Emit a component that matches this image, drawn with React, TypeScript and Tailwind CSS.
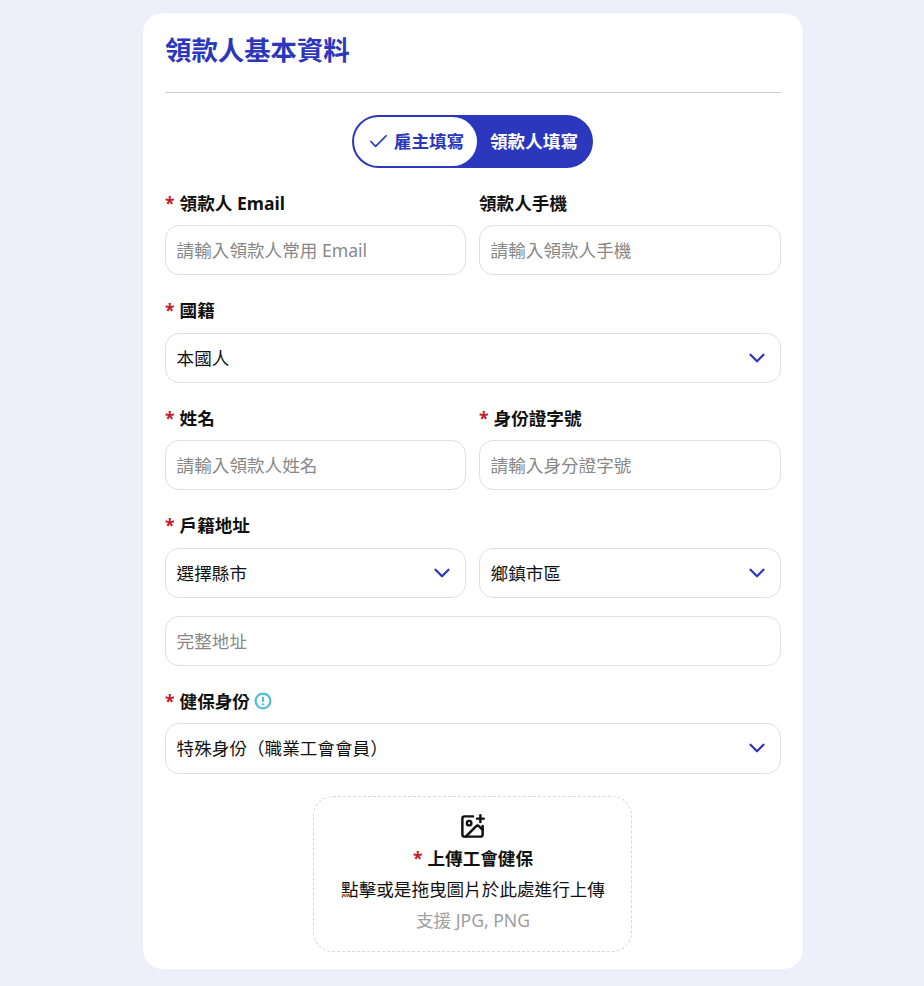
import { Check, ChevronDown, ImagePlus } from 'lucide-react'

const fontStack = "font-['Noto_Sans','Noto_Sans_CJK_TC',sans-serif]"

function FieldLabel({ text, required, className }: { text: string; required?: boolean; className?: string }) {
  return (
    <div className={`flex items-center h-[22px] text-[17.6px] font-bold text-[#111] leading-[22px] ${className ?? ''}`}>
      {required && <span className="text-[#c0202c] mr-[5px]">*</span>}
      <span>{text}</span>
    </div>
  )
}

function TextBox({ placeholder }: { placeholder: string }) {
  return (
    <input
      placeholder={placeholder}
      className="block w-full h-[50.4px] px-[10.6px] text-[17.6px] bg-white border border-[#e0e0e0] rounded-[14px] outline-none placeholder:text-[#888]"
    />
  )
}

function SelectBox({ value }: { value: string }) {
  return (
    <div className="flex items-center justify-between w-full h-[50.4px] pl-[10.6px] pr-[10.5px] text-[17.6px] text-[#111] bg-white border border-[#e0e0e0] rounded-[14px]">
      <span>{value}</span>
      <ChevronDown className="w-[26px] h-[26px] text-[#2b37bd]" strokeWidth={2.1} />
    </div>
  )
}

export default function App() {
  return (
    <div className={`min-h-[986px] bg-[#eeeffb] pt-[13px] pl-[143px] ${fontStack}`}>
      <div className="w-[660px] h-[956px] bg-white rounded-[20px] px-[22px]">
        {/* Header */}
        <div className="h-[80px] border-b border-[#ccc]">
          <h1 className="pt-[20px] text-[26.4px] leading-[34px] font-bold text-[#2b37bd]">領款人基本資料</h1>
        </div>

        {/* Who fills the form */}
        <div className="flex justify-center pr-px mt-[22px]">
          <div className="flex items-center w-[241px] h-[53px] rounded-full bg-[#2b37bd] p-[2px]">
            <div className="flex items-center justify-center gap-[4px] w-[123px] h-full rounded-full bg-white text-[17.6px] font-bold text-[#2b37bd]">
              <Check className="w-[23px] h-[23px]" strokeWidth={1.8} />
              <span>雇主填寫</span>
            </div>
            <div className="flex-1 text-center text-[17.6px] font-bold text-white">領款人填寫</div>
          </div>
        </div>

        {/* Form */}
        <div className="grid grid-cols-[301px_1fr] gap-x-[13px] mt-[23.7px]">
          <div>
            <FieldLabel text="領款人 Email" required className="mb-[11.2px]" />
            <TextBox placeholder="請輸入領款人常用 Email" />
          </div>
          <div>
            <FieldLabel text="領款人手機" className="mb-[11.2px]" />
            <TextBox placeholder="請輸入領款人手機" />
          </div>
        </div>

        <div className="mt-[24.1px]">
          <FieldLabel text="國籍" required className="mb-[11.2px]" />
          <SelectBox value="本國人" />
        </div>

        <div className="grid grid-cols-[301px_1fr] gap-x-[13px] mt-[23.9px]">
          <div>
            <FieldLabel text="姓名" required className="mb-[11.2px]" />
            <TextBox placeholder="請輸入領款人姓名" />
          </div>
          <div>
            <FieldLabel text="身份證字號" required className="mb-[11.2px]" />
            <TextBox placeholder="請輸入身分證字號" />
          </div>
        </div>

        <div className="mt-[24px]">
          <FieldLabel text="戶籍地址" required className="mb-[11.2px]" />
          <div className="grid grid-cols-[301px_1fr] gap-x-[13px]">
            <SelectBox value="選擇縣市" />
            <SelectBox value="鄉鎮市區" />
          </div>
          <div className="mt-[17.9px]">
            <TextBox placeholder="完整地址" />
          </div>
        </div>

        <div className="mt-[23.8px]">
          <div className="flex items-center gap-[4px] mb-[11.2px]">
            <FieldLabel text="健保身份" required />
            <svg width="18" height="18" viewBox="0 0 18 18" fill="none" stroke="#4fbfdc" strokeWidth="2.2">
              <circle cx="9" cy="9" r="7.4" />
              <path d="M9 4.8v5M9 11.6v1.6" />
            </svg>
          </div>
          <SelectBox value="特殊身份（職業工會會員）" />
        </div>

        {/* Upload */}
        <div className="flex justify-center pr-[2px] mt-[22px]">
          <div className="flex flex-col items-center w-[319px] h-[156px] pt-[16px] pl-[2px] border border-dashed border-[#d8d8d8] rounded-[20px]">
            <ImagePlus className="w-[27px] h-[27px] -ml-px text-[#111]" strokeWidth={2.2} />
            <div className="flex items-center mt-[5px] text-[17.6px] leading-[26.4px] font-bold text-[#111]">
              <span className="text-[#c0202c] mr-[5px]">*</span>
              <span>上傳工會健保</span>
            </div>
            <div className="mt-[4.6px] text-[17.6px] leading-[26.4px] text-[#111]">點擊或是拖曳圖片於此處進行上傳</div>
            <div className="mt-[4.6px] text-[17.6px] leading-[26.4px] text-[#a0a0a0]">支援 JPG, PNG</div>
          </div>
        </div>
      </div>
    </div>
  )
}
